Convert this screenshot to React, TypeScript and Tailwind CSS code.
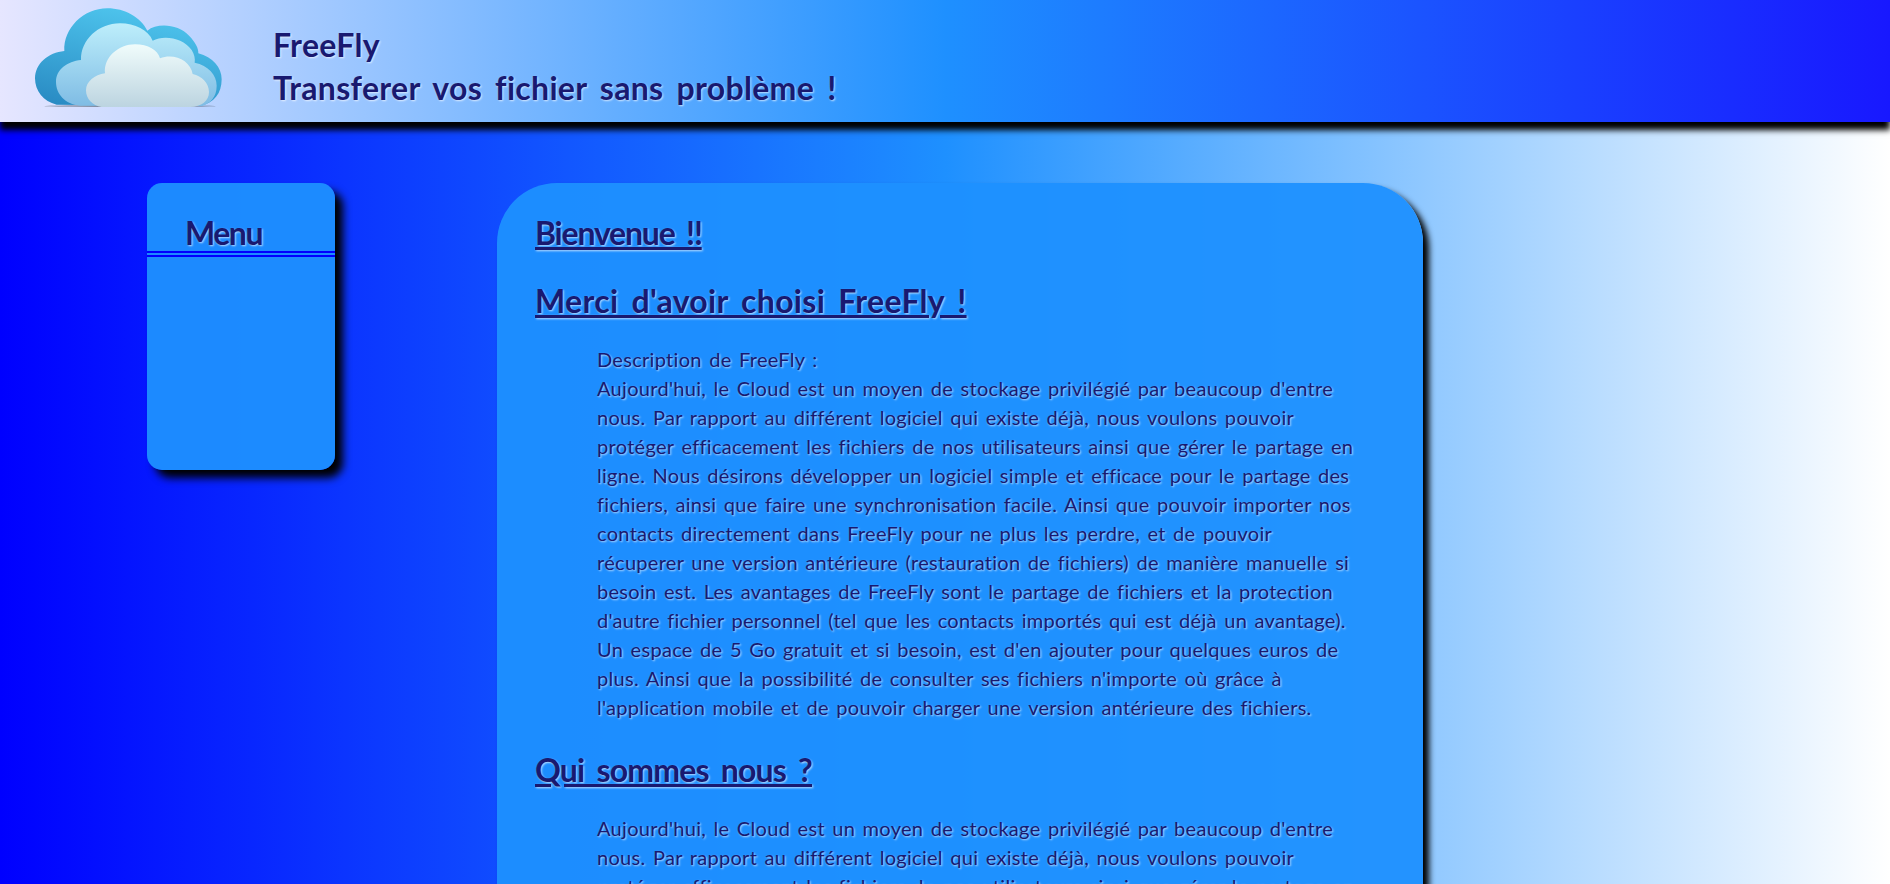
import React from 'react';

const DESCRIPTION = [
  "Aujourd'hui, le Cloud est un moyen de stockage privilégié par beaucoup d'entre",
  "nous. Par rapport au différent logiciel qui existe déjà, nous voulons pouvoir",
  "protéger efficacement les fichiers de nos utilisateurs ainsi que gérer le partage en",
  "ligne. Nous désirons développer un logiciel simple et efficace pour le partage des",
  "fichiers, ainsi que faire une synchronisation facile. Ainsi que pouvoir importer nos",
  "contacts directement dans FreeFly pour ne plus les perdre, et de pouvoir",
  "récuperer une version antérieure (restauration de fichiers) de manière manuelle si",
  "besoin est. Les avantages de FreeFly sont le partage de fichiers et la protection",
  "d'autre fichier personnel (tel que les contacts importés qui est déjà un avantage).",
  "Un espace de 5 Go gratuit et si besoin, est d'en ajouter pour quelques euros de",
  "plus. Ainsi que la possibilité de consulter ses fichiers n'importe où grâce à",
  "l'application mobile et de pouvoir charger une version antérieure des fichiers.",
];

const CloudLogo = () => (
  <svg viewBox="0 0 660 360" className="w-[220px] h-[120px] shrink-0">
    <defs>
      <linearGradient id="back" x1="0.6" y1="0" x2="0.2" y2="1">
        <stop offset="0" stopColor="#4fc6ee" />
        <stop offset="1" stopColor="#2a8cc4" />
      </linearGradient>
      <linearGradient id="mid" x1="0.5" y1="0" x2="0.5" y2="1">
        <stop offset="0" stopColor="#bdeefb" />
        <stop offset="1" stopColor="#7fbce4" />
      </linearGradient>
      <linearGradient id="front" x1="0.5" y1="0" x2="0.5" y2="1">
        <stop offset="0" stopColor="#f0fcfb" />
        <stop offset="1" stopColor="#bcd4e0" />
      </linearGradient>
    </defs>
    <ellipse cx="330" cy="318" rx="258" ry="2.5" fill="#3d4750" opacity="0.7" />
    <path
      d="M110 314C70 305 45 272 45 235C45 190 85 158 133 153C130 85 190 25 262 25C315 25 362 52 382 92C412 68 475 72 508 108C526 127 536 145 535 160C578 172 605 202 605 238C605 280 582 310 540 318Z"
      fill="url(#back)"
    />
    <path
      d="M180 317C135 312 108 282 108 245C108 208 142 184 183 180C182 120 235 70 300 70C345 70 385 90 398 122C432 104 490 114 515 150C523 163 526 176 524 188C565 196 590 225 590 257C590 290 572 310 545 318Z"
      fill="url(#mid)"
    />
    <path
      d="M245 321C217 317 198 297 198 271C198 245 224 224 255 220C250 172 296 133 345 133C385 133 413 150 420 175C462 158 512 182 518 222C546 228 567 250 567 276C567 302 545 321 510 321Z"
      fill="url(#front)"
    />
  </svg>
);

const Description = () => (
  <>
    {DESCRIPTION.map((line) => (
      <p key={line} className="whitespace-nowrap">
        {line}
      </p>
    ))}
  </>
);

export default function App() {
  return (
    <div className="h-screen overflow-hidden bg-linear-to-r/srgb from-[#0000ff] via-[#1e90ff] via-50% to-white font-['Lato',sans-serif] text-[#191970] [text-shadow:1px_1px_2px_#ffffffb0]">
      <header className="h-[122px] flex items-start pl-5 bg-linear-to-r/srgb from-[#e6e6ff] via-[#1e90ff] via-50% to-[#1818ff] shadow-[0_8px_6px_#000]">
        <CloudLogo />
        <div className="ml-[33px] pt-[23px] text-[32px] leading-[43px] font-bold whitespace-nowrap tracking-[0.3px] [word-spacing:5px]">
          <p>FreeFly</p>
          <p>Transferer vos fichier sans problème !</p>
        </div>
      </header>

      <div className="flex items-start pt-[61px] pl-[147px]">
        <nav className="w-[188px] h-[287px] rounded-[15px] bg-[#1e90ff]/95 shadow-[8px_8px_8px_#000] pt-[31px]">
          <h2 className="text-[32px] leading-[37px] font-bold pl-[38px] border-b-[6px] border-double border-[#0000ff] tracking-[-1.5px]">
            Menu
          </h2>
        </nav>

        <main className="ml-[162px] w-[926px] rounded-[60px] bg-[#1e90ff]/95 shadow-[6px_6px_6px_#000] px-[38px] pt-[31px] pb-10">
          <h1 className="text-[32px] leading-[37px] font-bold underline mb-[31px] whitespace-nowrap tracking-[-1.2px] [word-spacing:5px]">
            Bienvenue !!
          </h1>
          <h1 className="text-[32px] leading-[37px] font-bold underline mb-[26px] whitespace-nowrap tracking-[0.3px] [word-spacing:5px]">
            Merci d'avoir choisi FreeFly !
          </h1>
          <div className="ml-[62px] text-[20px] leading-[29px] mb-[29px] tracking-[0.3px] [word-spacing:2px]">
            <p>Description de FreeFly :</p>
            <Description />
          </div>
          <h1 className="text-[32px] leading-[37px] font-bold underline mb-[26px] whitespace-nowrap tracking-[-0.8px] [word-spacing:5px]">
            Qui sommes nous ?
          </h1>
          <div className="ml-[62px] text-[20px] leading-[29px] tracking-[0.3px] [word-spacing:2px]">
            <Description />
          </div>
        </main>
      </div>
    </div>
  );
}
